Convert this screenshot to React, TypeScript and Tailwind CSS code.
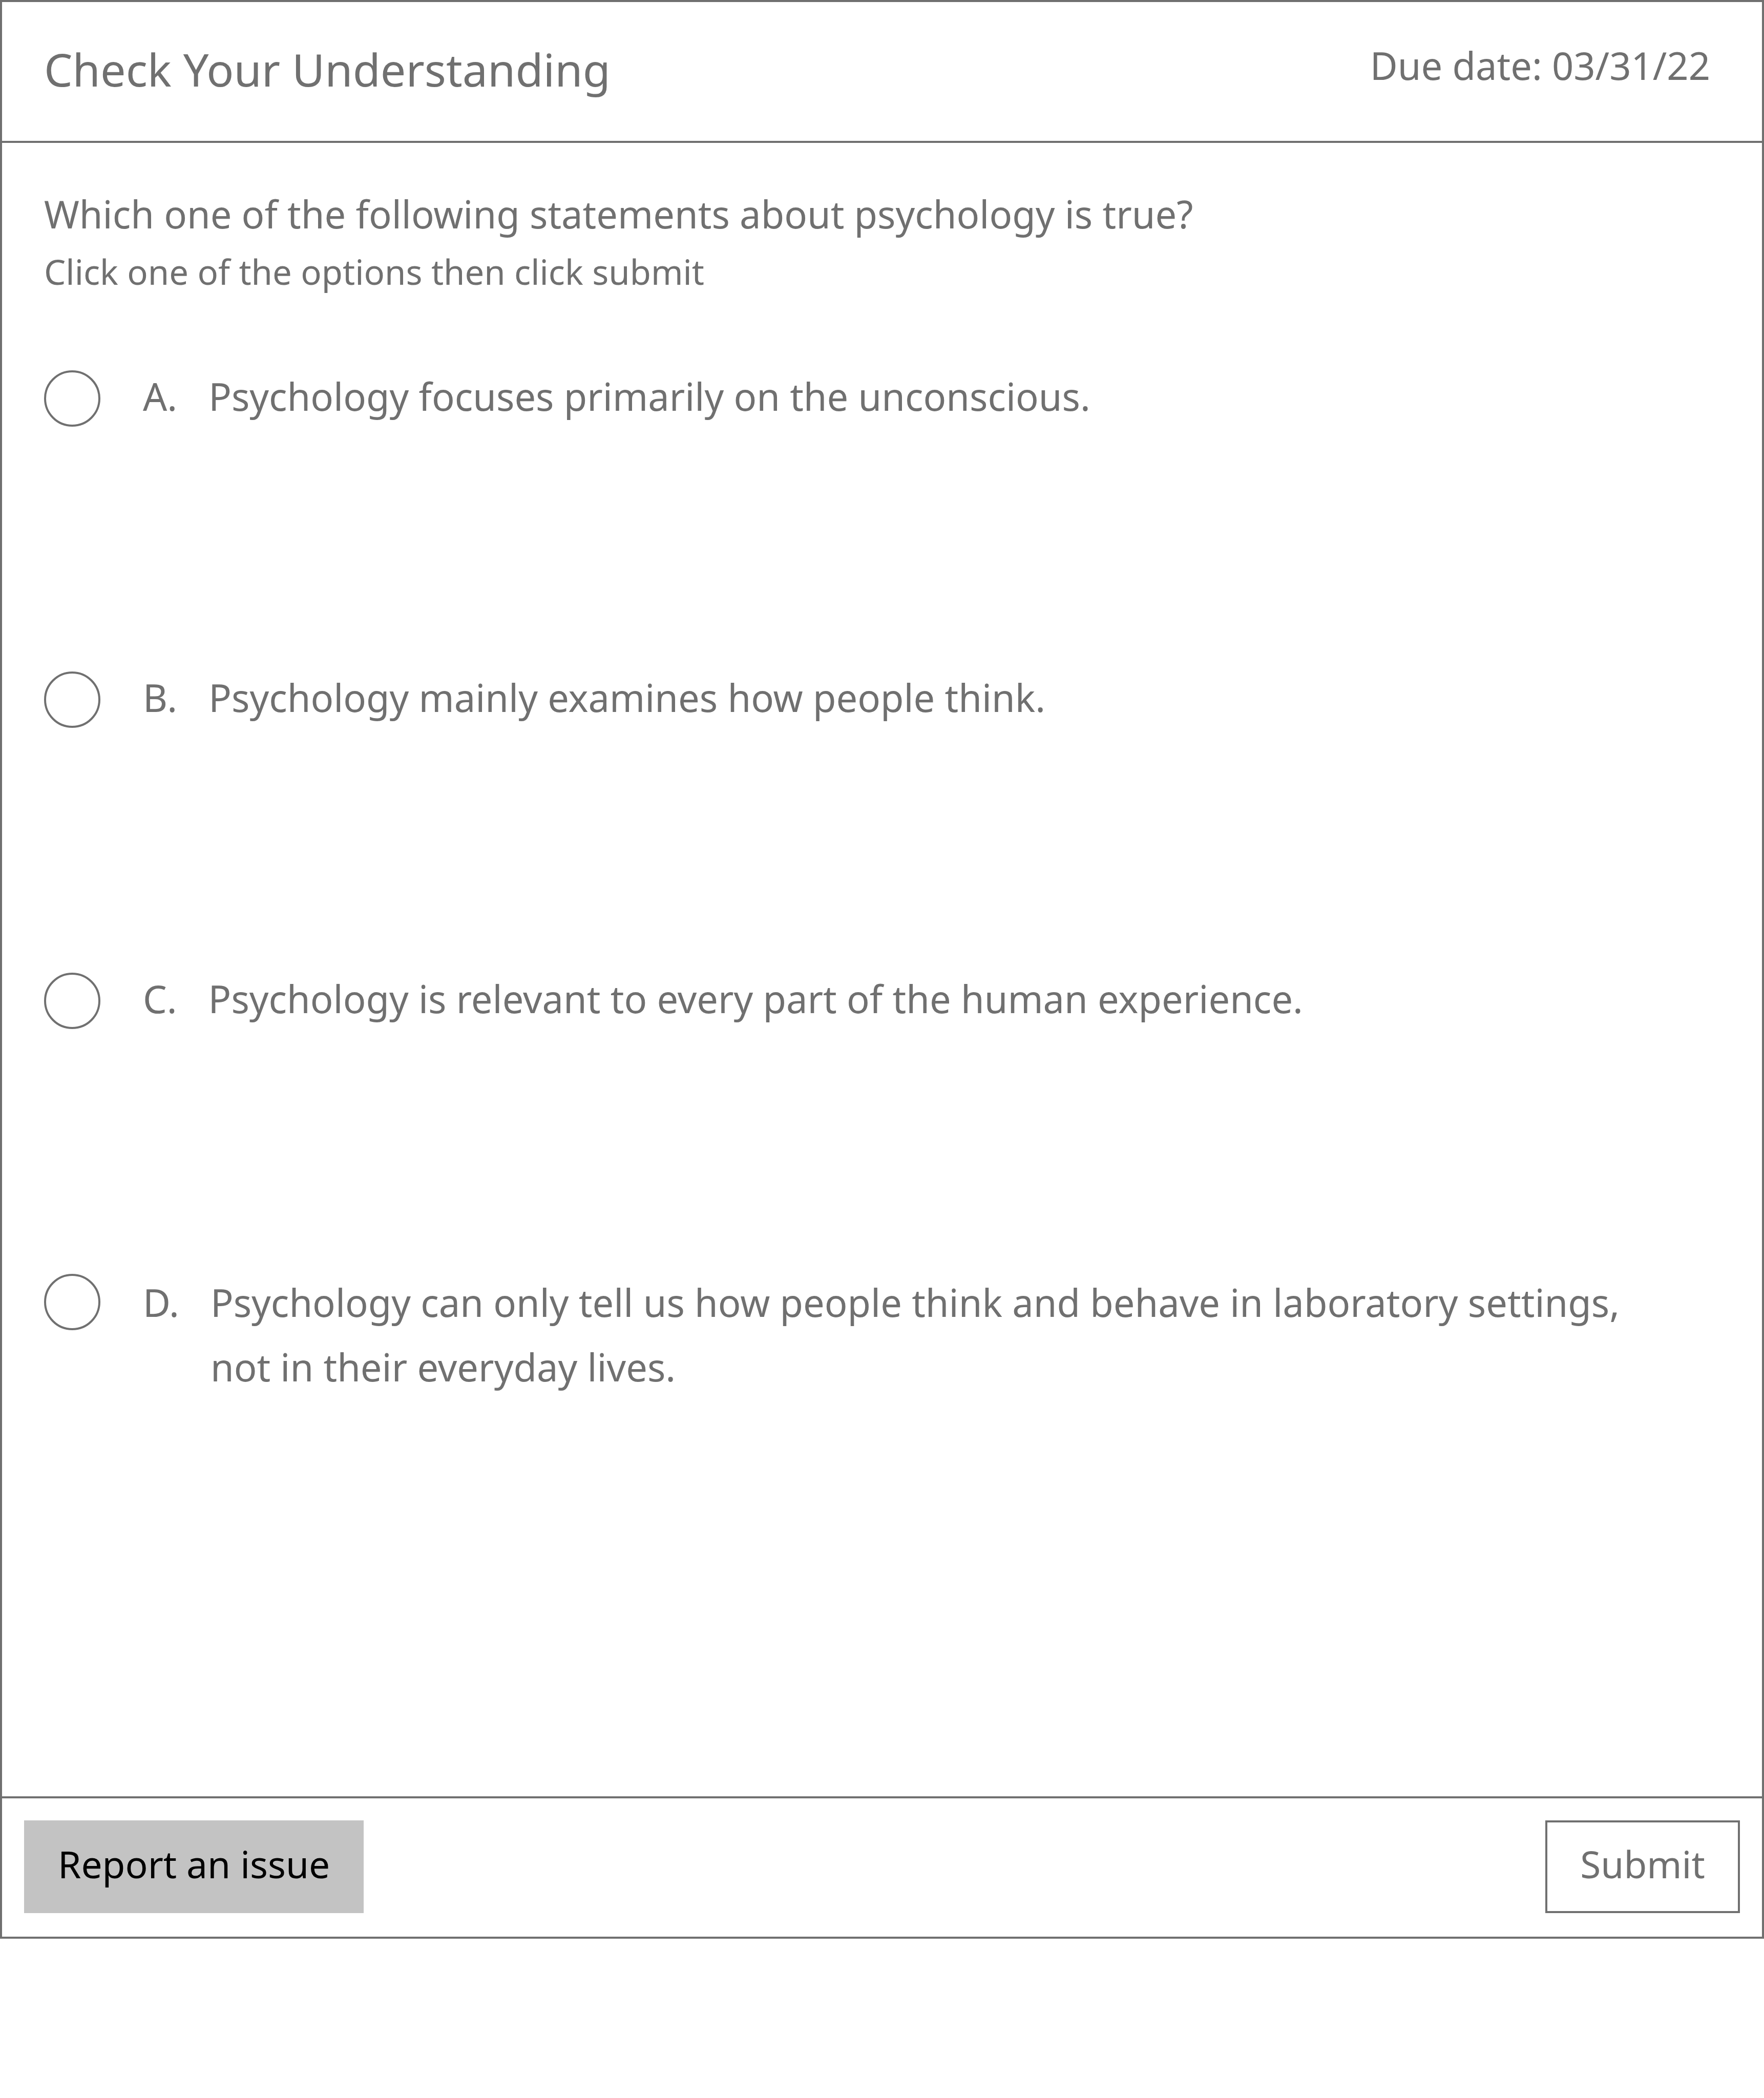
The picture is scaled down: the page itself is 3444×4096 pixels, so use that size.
type Option = {
  letter: string;
  text: string;
  leading: string;
};

const options: Option[] = [
  { letter: "A.", text: "Psychology focuses primarily on the unconscious.", leading: "leading-[116px]" },
  { letter: "B.", text: "Psychology mainly examines how people think.", leading: "leading-[116px]" },
  { letter: "C.", text: "Psychology is relevant to every part of the human experience.", leading: "leading-[116px]" },
  {
    letter: "D.",
    text: "Psychology can only tell us how people think and behave in laboratory settings, not in their everyday lives.",
    leading: "leading-[126px]",
  },
];

function Header() {
  return (
    <header className="flex items-start justify-between border-b-4 border-[#707070] pt-[69px] pr-[101px] pb-[78px] pl-[82px]">
      <h1 className="text-[88px] leading-[124px]">Check Your Understanding</h1>
      <p className="text-[74px] leading-[110px]">Due date: 03/31/22</p>
    </header>
  );
}

function AnswerOption({ letter, text, leading }: Option) {
  const id = `answer-${letter.charAt(0).toLowerCase()}`;
  return (
    <li className="flex min-h-[588px] items-start gap-[83px]">
      <input
        id={id}
        type="radio"
        name="answer"
        value={letter.charAt(0)}
        className="mt-[7px] size-[110px] shrink-0 appearance-none rounded-full border-4 border-[#707070] bg-white checked:bg-[#707070]"
      />
      <label htmlFor={id} className={`flex gap-[61px] text-[74px] ${leading}`}>
        <span>{letter}</span>
        <span>{text}</span>
      </label>
    </li>
  );
}

export default function App() {
  return (
    <div className="bg-white font-['Noto_Sans',sans-serif] text-[#707070]">
      <form className="border-4 border-[#707070]" onSubmit={(event) => event.preventDefault()}>
        <Header />
        <fieldset aria-labelledby="question" className="pt-[84px] pr-[181px] pb-[439px] pl-[82px]">
          <p id="question" className="text-[74px] leading-[110px]">
            Which one of the following statements about psychology is true?
          </p>
          <p className="text-[67px] leading-[114px]">Click one of the options then click submit</p>
          <ul className="mt-[129px]">
            {options.map((option) => (
              <AnswerOption key={option.letter} {...option} />
            ))}
          </ul>
        </fieldset>
        <footer className="flex items-start justify-between border-t-4 border-[#707070] px-[43px] pt-[43px] pb-[46px]">
          <button
            type="button"
            className="min-w-[380px] border-4 border-[#c3c3c3] bg-[#c3c3c3] px-[62px] pt-[26px] pb-[37px] text-[73px] leading-[110px] text-black"
          >
            Report an issue
          </button>
          <button
            type="submit"
            className="min-w-[380px] border-4 border-[#707070] bg-white px-[62px] pt-[26px] pb-[37px] text-[73px] leading-[110px]"
          >
            Submit
          </button>
        </footer>
      </form>
    </div>
  );
}
